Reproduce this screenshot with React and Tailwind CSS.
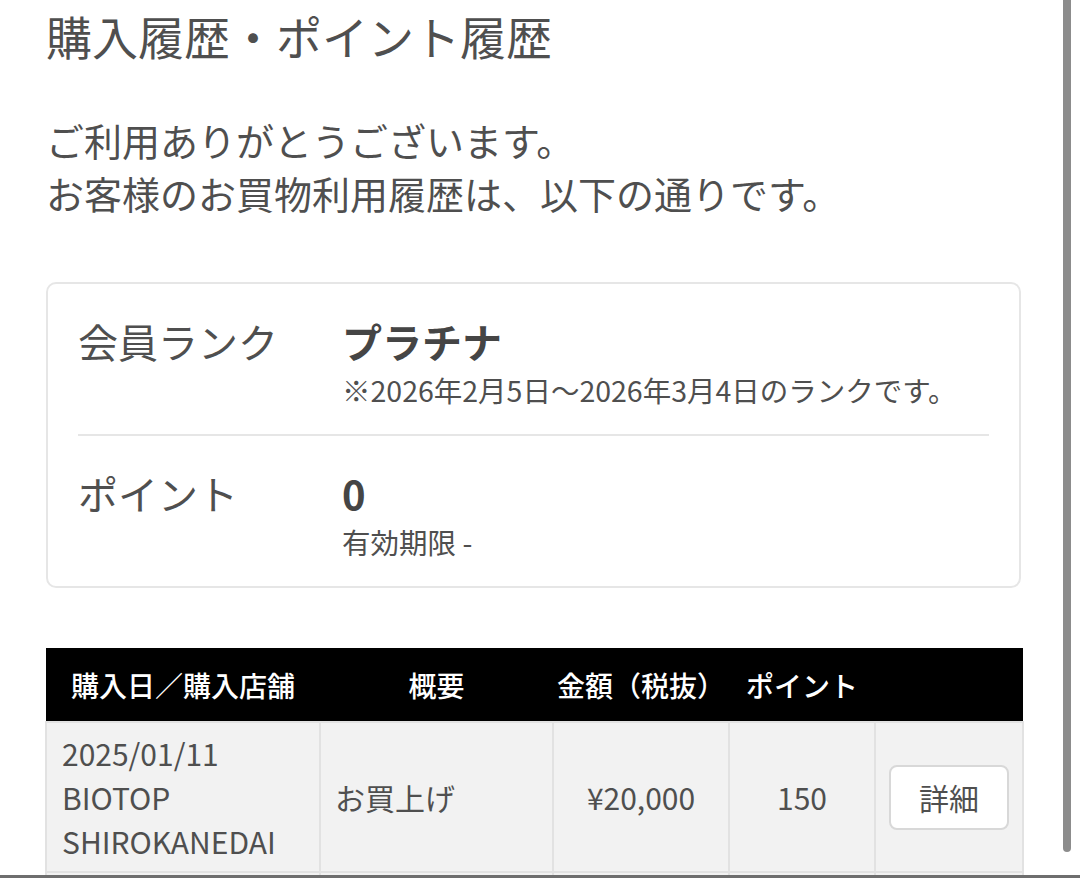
import React from 'react';

const rows = [
    { date: '2025/01/11', store: ['BIOTOP', 'SHIROKANEDAI'], summary: 'お買上げ', amount: '¥20,000', point: '150' },
];

const InfoRow = ({ label, value, note, last }) => (
    <div className={`flex pt-[33px] pb-[24px] ${last ? '' : 'border-b-2 border-[#e6e6e6]'}`}>
        <div className="w-[264px] shrink-0 text-[40px] leading-[48px]">{label}</div>
        <div>
            <div className="text-[40px] leading-[48px] font-bold text-[#454545]">{value}</div>
            <div className="mt-[5px] text-[28.5px] leading-[40px]">{note}</div>
        </div>
    </div>
);

export default function App() {
    return (
        <div
            className="relative h-[878px] overflow-hidden bg-white text-[#4f4f4f]"
            style={{ fontFamily: '"Noto Sans CJK JP", "Noto Sans", sans-serif' }}
        >
            <div className="ml-[46px] w-[975px]">
                <h1 className="text-[46px] leading-[70px] font-normal">購入履歴・ポイント履歴</h1>

                <p className="mt-[43px] text-[38px] leading-[53px]">
                    ご利用ありがとうございます。<br />
                    お客様のお買物利用履歴は、以下の通りです。
                </p>

                <div className="mt-[63px] border-2 border-[#e6e6e6] rounded-[10px] px-[30px]">
                    <InfoRow label="会員ランク" value="プラチナ" note="※2026年2月5日〜2026年3月4日のランクです。" />
                    <InfoRow label="ポイント" value="0" note="有効期限 -" last />
                </div>

                <table className="mt-[60px] -ml-[1px] w-[977px] table-fixed border-collapse">
                    <colgroup>
                        <col className="w-[274px]" />
                        <col className="w-[233px]" />
                        <col className="w-[176px]" />
                        <col className="w-[146px]" />
                        <col className="w-[148px]" />
                    </colgroup>
                    <thead>
                        <tr className="bg-black text-white text-[28px]">
                            <th className="h-[74px] font-medium text-center">購入日／購入店舗</th>
                            <th className="h-[74px] font-medium text-center">概要</th>
                            <th className="h-[74px] font-medium text-center">金額（税抜）</th>
                            <th className="h-[74px] font-medium text-center">ポイント</th>
                            <th className="h-[74px]"></th>
                        </tr>
                    </thead>
                    <tbody>
                        {rows.map((row) => (
                            <tr key={row.date} className="bg-[#f2f2f2] text-[30px] leading-[44px]">
                                <td className="border-2 border-[#e2e2e2] py-[8px] pl-[15px]">
                                    <div>{row.date}</div>
                                    {row.store.map((s) => (
                                        <div key={s}>{s}</div>
                                    ))}
                                </td>
                                <td className="border-2 border-[#e2e2e2] pl-[14px]">{row.summary}</td>
                                <td className="border-2 border-[#e2e2e2] text-center">{row.amount}</td>
                                <td className="border-2 border-[#e2e2e2] text-center">{row.point}</td>
                                <td className="border-2 border-[#e2e2e2] text-center">
                                    <button className="w-[120px] h-[65px] bg-white border-2 border-[#d8d8d8] rounded-[8px] text-[30px] text-[#4f4f4f]">
                                        詳細
                                    </button>
                                </td>
                            </tr>
                        ))}
                        <tr className="bg-[#f2f2f2]">
                            <td className="h-[40px] border-2 border-[#e2e2e2]"></td>
                            <td className="border-2 border-[#e2e2e2]"></td>
                            <td className="border-2 border-[#e2e2e2]"></td>
                            <td className="border-2 border-[#e2e2e2]"></td>
                            <td className="border-2 border-[#e2e2e2]"></td>
                        </tr>
                    </tbody>
                </table>
            </div>

            {/* scrollbar */}
            <div className="absolute top-0 right-[9px] w-[8px] h-[852px] rounded-b-full bg-[#8c8c8c]"></div>
            <div className="absolute bottom-0 left-0 right-0 h-[3px] bg-[#6e6e6e]"></div>
        </div>
    );
}
